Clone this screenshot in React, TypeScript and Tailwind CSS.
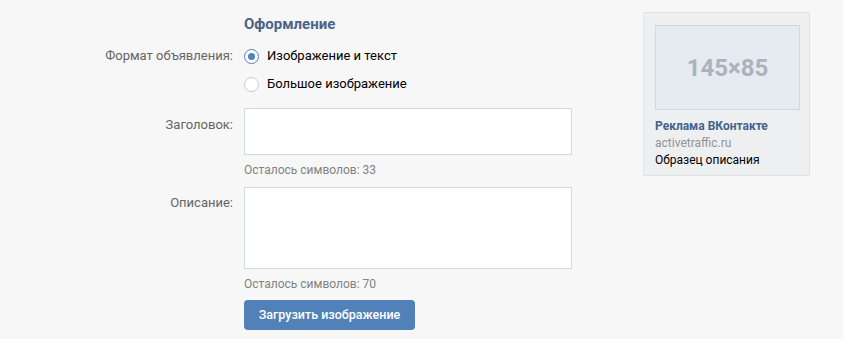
import React, { useState } from 'react';

const font = { fontFamily: 'Roboto, "Noto Sans", sans-serif' };

const Radio = ({ checked, label, onSelect }: { checked: boolean; label: string; onSelect: () => void }) => (
  <button type="button" onClick={onSelect} className="flex items-center h-[28px] text-left">
    <span
      className={`flex items-center justify-center w-[15px] h-[15px] rounded-full border bg-white ${
        checked ? 'border-[#5181b8]' : 'border-[#c5ccd4]'
      }`}
    >
      {checked && <span className="w-[7px] h-[7px] rounded-full bg-[#5181b8]" />}
    </span>
    <span className="ml-[8px] text-[13px] text-black">{label}</span>
  </button>
);

export default function App() {
  const [format, setFormat] = useState('text');
  const [title, setTitle] = useState('');
  const [desc, setDesc] = useState('');

  return (
    <div className="w-[843px] h-[339px] bg-[#f7f7f7] overflow-hidden" style={font}>
      <div className="flex">
        {/* Form */}
        <div className="w-[572px] pt-[15px]">
          <div className="flex">
            <div className="w-[233px]" />
            <h2 className="ml-[11px] text-[15px] leading-[18px] font-bold text-[#4a6389]">Оформление</h2>
          </div>

          <div className="flex mt-[9px]">
            <div className="w-[233px] h-[28px] flex items-center justify-end text-[13px] text-[#656565]">
              Формат объявления:
            </div>
            <div className="ml-[11px] flex flex-col">
              <Radio checked={format === 'text'} label="Изображение и текст" onSelect={() => setFormat('text')} />
              <Radio checked={format === 'big'} label="Большое изображение" onSelect={() => setFormat('big')} />
            </div>
          </div>

          <div className="flex mt-[10px]">
            <div className="w-[233px] pt-[9px] text-right text-[13px] leading-[16px] text-[#656565]">Заголовок:</div>
            <div className="ml-[11px]">
              <input
                value={title}
                onChange={(e) => setTitle(e.target.value)}
                className="block w-[328px] h-[47px] bg-white border border-[#d3d9de] px-[9px] text-[13px] outline-none"
              />
              <div className="mt-[8px] text-[12px] leading-[15px] text-[#828282]">
                Осталось символов: {33 - title.length}
              </div>
            </div>
          </div>

          <div className="flex mt-[9px]">
            <div className="w-[233px] pt-[8px] text-right text-[13px] leading-[16px] text-[#656565]">Описание:</div>
            <div className="ml-[11px]">
              <textarea
                value={desc}
                onChange={(e) => setDesc(e.target.value)}
                className="block w-[328px] h-[82px] bg-white border border-[#d3d9de] px-[9px] py-[6px] text-[13px] outline-none resize-none"
              />
              <div className="mt-[8px] text-[12px] leading-[15px] text-[#828282]">
                Осталось символов: {70 - desc.length}
              </div>
              <button
                type="button"
                className="mt-[8px] h-[30px] w-[171px] rounded-[4px] bg-[#5181b8] text-white text-[12.5px] font-medium"
              >
                Загрузить изображение
              </button>
            </div>
          </div>
        </div>

        {/* Preview */}
        <div className="ml-[71px] mt-[12px] w-[167px] h-[164px] bg-[#eeeff1] border border-[#e1e3e6] pl-[11px] pt-[12px]">
          <div className="w-[145px] h-[85px] bg-[#e5ebf1] border border-[#d0d9e3] flex items-center justify-center text-[24px] font-bold text-[#a9b3bf]">
            145×85
          </div>
          <div className="mt-[8px] text-[12px] leading-[17px] font-bold text-[#42648b]">Реклама ВКонтакте</div>
          <div className="text-[12px] leading-[17px] text-[#939393]">activetraffic.ru</div>
          <div className="text-[12px] leading-[16px] text-black">Образец описания</div>
        </div>
      </div>
    </div>
  );
}
